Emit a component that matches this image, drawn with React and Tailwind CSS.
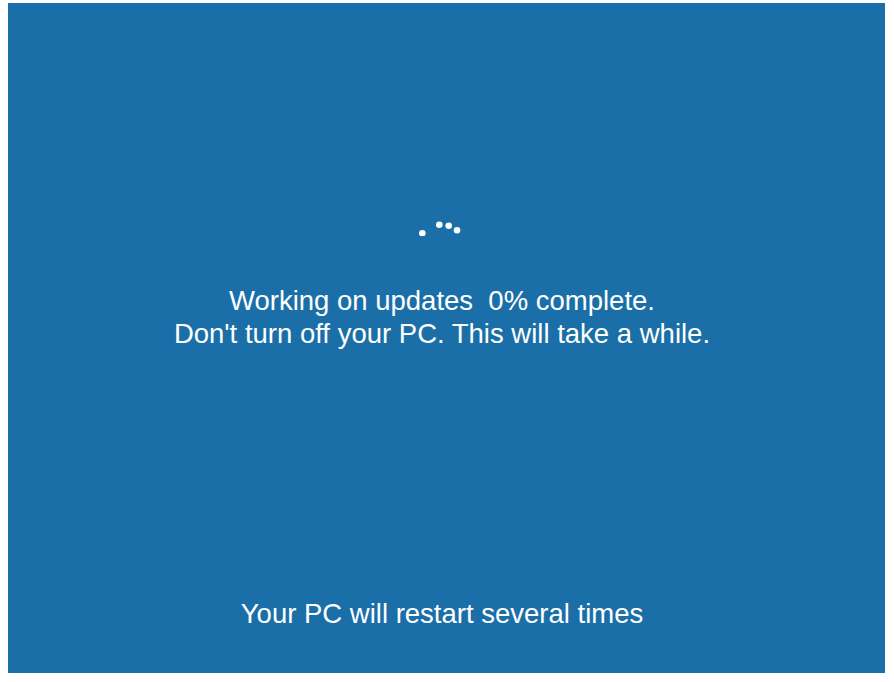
export default function App() {
  return (
    <div className="w-[894px] h-[682px] bg-white pt-[3px] pl-[8px]">
      <div
        className="w-[877px] h-[670px] bg-[#1a6fa8] flex flex-col items-center pr-[9px] text-white text-center"
        style={{ fontFamily: '"Liberation Sans", Arial, sans-serif' }}
      >
        <svg className="mt-[217px] shrink-0" width="54" height="16" viewBox="0 0 54 16">
          <circle cx="7.3" cy="13.3" r="3.3" fill="#fff" />
          <circle cx="24.3" cy="4.7" r="3.3" fill="#fff" />
          <circle cx="33.7" cy="5.7" r="3.3" fill="#fff" />
          <circle cx="42" cy="10.3" r="3.3" fill="#fff" />
        </svg>
        <div className="mt-[48px] text-[27.5px] leading-[33px] whitespace-pre">
          <p>Working on updates  0% complete.</p>
          <p>Don't turn off your PC. This will take a while.</p>
        </div>
        <div className="flex-1" />
        <p className="text-[27.5px] leading-[33px] mb-[43px]">Your PC will restart several times</p>
      </div>
    </div>
  );
}
